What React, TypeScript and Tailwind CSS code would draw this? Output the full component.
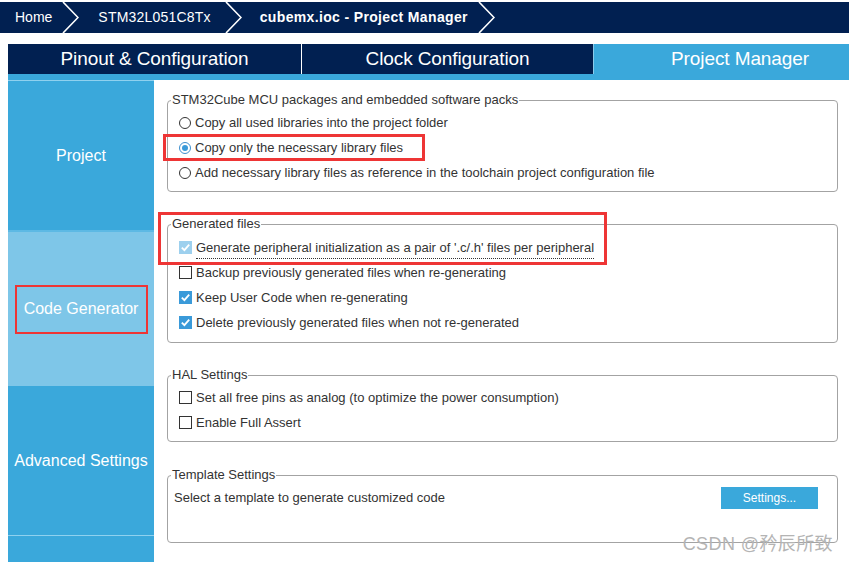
import React from "react";

type CheckState = "on" | "off" | "dis";

function Chevron() {
  return (
    <svg width="17" height="31" viewBox="0 0 17 31" className="shrink-0">
      <polyline points="1,0 16,15.5 1,31" fill="none" stroke="white" strokeWidth="1.6" />
    </svg>
  );
}

function Check({ state }: { state: CheckState }) {
  if (state === "off") {
    return <span className="w-[13px] h-[13px] shrink-0 border border-[#333] bg-white" />;
  }
  return (
    <span
      className={`w-[13px] h-[13px] shrink-0 flex items-center justify-center ${
        state === "on" ? "bg-[#3a9ad9]" : "bg-[#9dd0ee]"
      }`}
    >
      <svg width="13" height="13" viewBox="0 0 13 13">
        <path d="M2.8 6.6 L5.4 9.2 L10.2 3.6" fill="none" stroke="white" strokeWidth="1.8" />
      </svg>
    </span>
  );
}

function Radio({ on }: { on?: boolean }) {
  return (
    <span
      className={`w-[12px] h-[12px] shrink-0 rounded-full border flex items-center justify-center bg-white ${
        on ? "border-[#3d8fce]" : "border-[#333]"
      }`}
    >
      {on && <span className="w-[6px] h-[6px] rounded-full bg-[#3a9ad9]" />}
    </span>
  );
}

function Row({ icon, children }: { icon: React.ReactNode; children: React.ReactNode }) {
  return (
    <div className="h-[25px] flex items-center pl-[11px] gap-[4px]">
      {icon}
      <span>{children}</span>
    </div>
  );
}

function Group({ title, children, className = "" }: { title: string; children: React.ReactNode; className?: string }) {
  return (
    <fieldset className={`border border-[#a3a3a3] rounded-[4px] pl-[3px] ${className}`}>
      <legend className="px-[1px] leading-[14px] text-[13px] text-[#333]">{title}</legend>
      <div className="-ml-[3px]">{children}</div>
    </fieldset>
  );
}

export default function App() {
  return (
    <div className="relative w-[849px] h-[562px] overflow-hidden bg-white font-['Liberation_Sans',Arial,sans-serif]">
      {/* breadcrumb */}
      <div className="pt-[2px]">
        <div className="h-[31px] bg-[#012051] flex items-center text-white text-[14px]">
          <span className="ml-[15px]">Home</span>
          <span className="ml-[10px] flex"><Chevron /></span>
          <span className="ml-[19px] tracking-[0.2px]">STM32L051C8Tx</span>
          <span className="ml-[14px] flex"><Chevron /></span>
          <span className="ml-[18px] font-bold tracking-[0.35px]">cubemx.ioc - Project Manager</span>
          <span className="ml-[10px] flex"><Chevron /></span>
        </div>
      </div>

      {/* main tabs */}
      <div className="mt-[11px] ml-[8px]">
        <div className="h-[30px] flex text-white text-[19px] tracking-[-0.1px]">
          <div className="w-[294px] shrink-0 bg-[#012051] border-r border-white flex items-center justify-center">
            Pinout &amp; Configuration
          </div>
          <div className="w-[292px] shrink-0 bg-[#012051] border-r border-[#8ccbea] flex items-center justify-center">
            Clock Configuration
          </div>
          <div className="w-[292px] shrink-0 bg-[#3aa8db] flex items-center justify-center">Project Manager</div>
        </div>
        <div className="h-[6px] bg-[#3aa8db]" />
      </div>

      <div className="flex ml-[8px]">
        {/* side menu */}
        <div className="w-[146px] shrink-0 flex flex-col text-white text-[16px]">
          <div className="h-[1px] bg-[#8fd1ef]" />
          <div className="h-[149px] bg-[#3aa8db] flex items-center justify-center">Project</div>
          <div className="h-[2px] bg-[#5db9e4]" />
          <div className="h-[154px] bg-[#7ec6e8] flex items-center justify-center">
            <div className="w-[133px] h-[49px] border-2 border-[#ee3535] flex items-center justify-center">
              Code Generator
            </div>
          </div>
          <div className="h-[149px] bg-[#3aa8db] flex items-center justify-center">Advanced Settings</div>
          <div className="h-[1px] bg-[#8fd1ef]" />
          <div className="h-[40px] bg-[#3aa8db]" />
        </div>

        {/* content */}
        <div className="w-[671px] ml-[13px] pt-[13px] text-[13px] text-[#333]">
          <Group title="STM32Cube MCU packages and embedded software packs">
            <div className="pt-[3px] pb-[6px]">
              <Row icon={<Radio />}>Copy all used libraries into the project folder</Row>
              <Row icon={<Radio on />}>Copy only the necessary library files</Row>
              <Row icon={<Radio />}>
                Add necessary library files as reference in the toolchain project configuration file
              </Row>
            </div>
          </Group>

          <Group title="Generated files" className="mt-[25px]">
            <div className="pt-[4px] pb-[7px]">
              <Row icon={<Check state="dis" />}>
                <span className="inline-block leading-[21px] border-b border-dotted border-[#333]">
                  Generate peripheral initialization as a pair of '.c/.h' files per peripheral
                </span>
              </Row>
              <Row icon={<Check state="off" />}>Backup previously generated files when re-generating</Row>
              <Row icon={<Check state="on" />}>Keep User Code when re-generating</Row>
              <Row icon={<Check state="on" />}>Delete previously generated files when not re-generated</Row>
            </div>
          </Group>

          <Group title="HAL Settings" className="mt-[25px]">
            <div className="pt-[3px] pb-[6px]">
              <Row icon={<Check state="off" />}>Set all free pins as analog (to optimize the power consumption)</Row>
              <Row icon={<Check state="off" />}>Enable Full Assert</Row>
            </div>
          </Group>

          <Group title="Template Settings" className="mt-[26px]">
            <div className="pt-[3px] pb-[32px]">
              <div className="h-[25px] flex items-center justify-between pl-[6px] pr-[19px]">
                <span>Select a template to generate customized code</span>
                <button className="w-[97px] h-[22px] bg-[#3aa8db] text-white text-[12px]">Settings...</button>
              </div>
            </div>
          </Group>
        </div>
      </div>

      {/* annotation boxes */}
      <div className="absolute left-[163px] top-[134px] w-[262px] h-[27px] border-[3px] border-[#ee3535]" />
      <div className="absolute left-[158px] top-[212px] w-[449px] h-[53px] border-[3px] border-[#ee3535]" />

      {/* watermark */}
      <div className="absolute right-[16px] top-[531px] text-[18px] tracking-[0.4px] text-[#b4b4b4] font-['Liberation_Sans','Noto_Sans_CJK_SC',sans-serif]">
        CSDN @矜辰所致
      </div>
    </div>
  );
}
